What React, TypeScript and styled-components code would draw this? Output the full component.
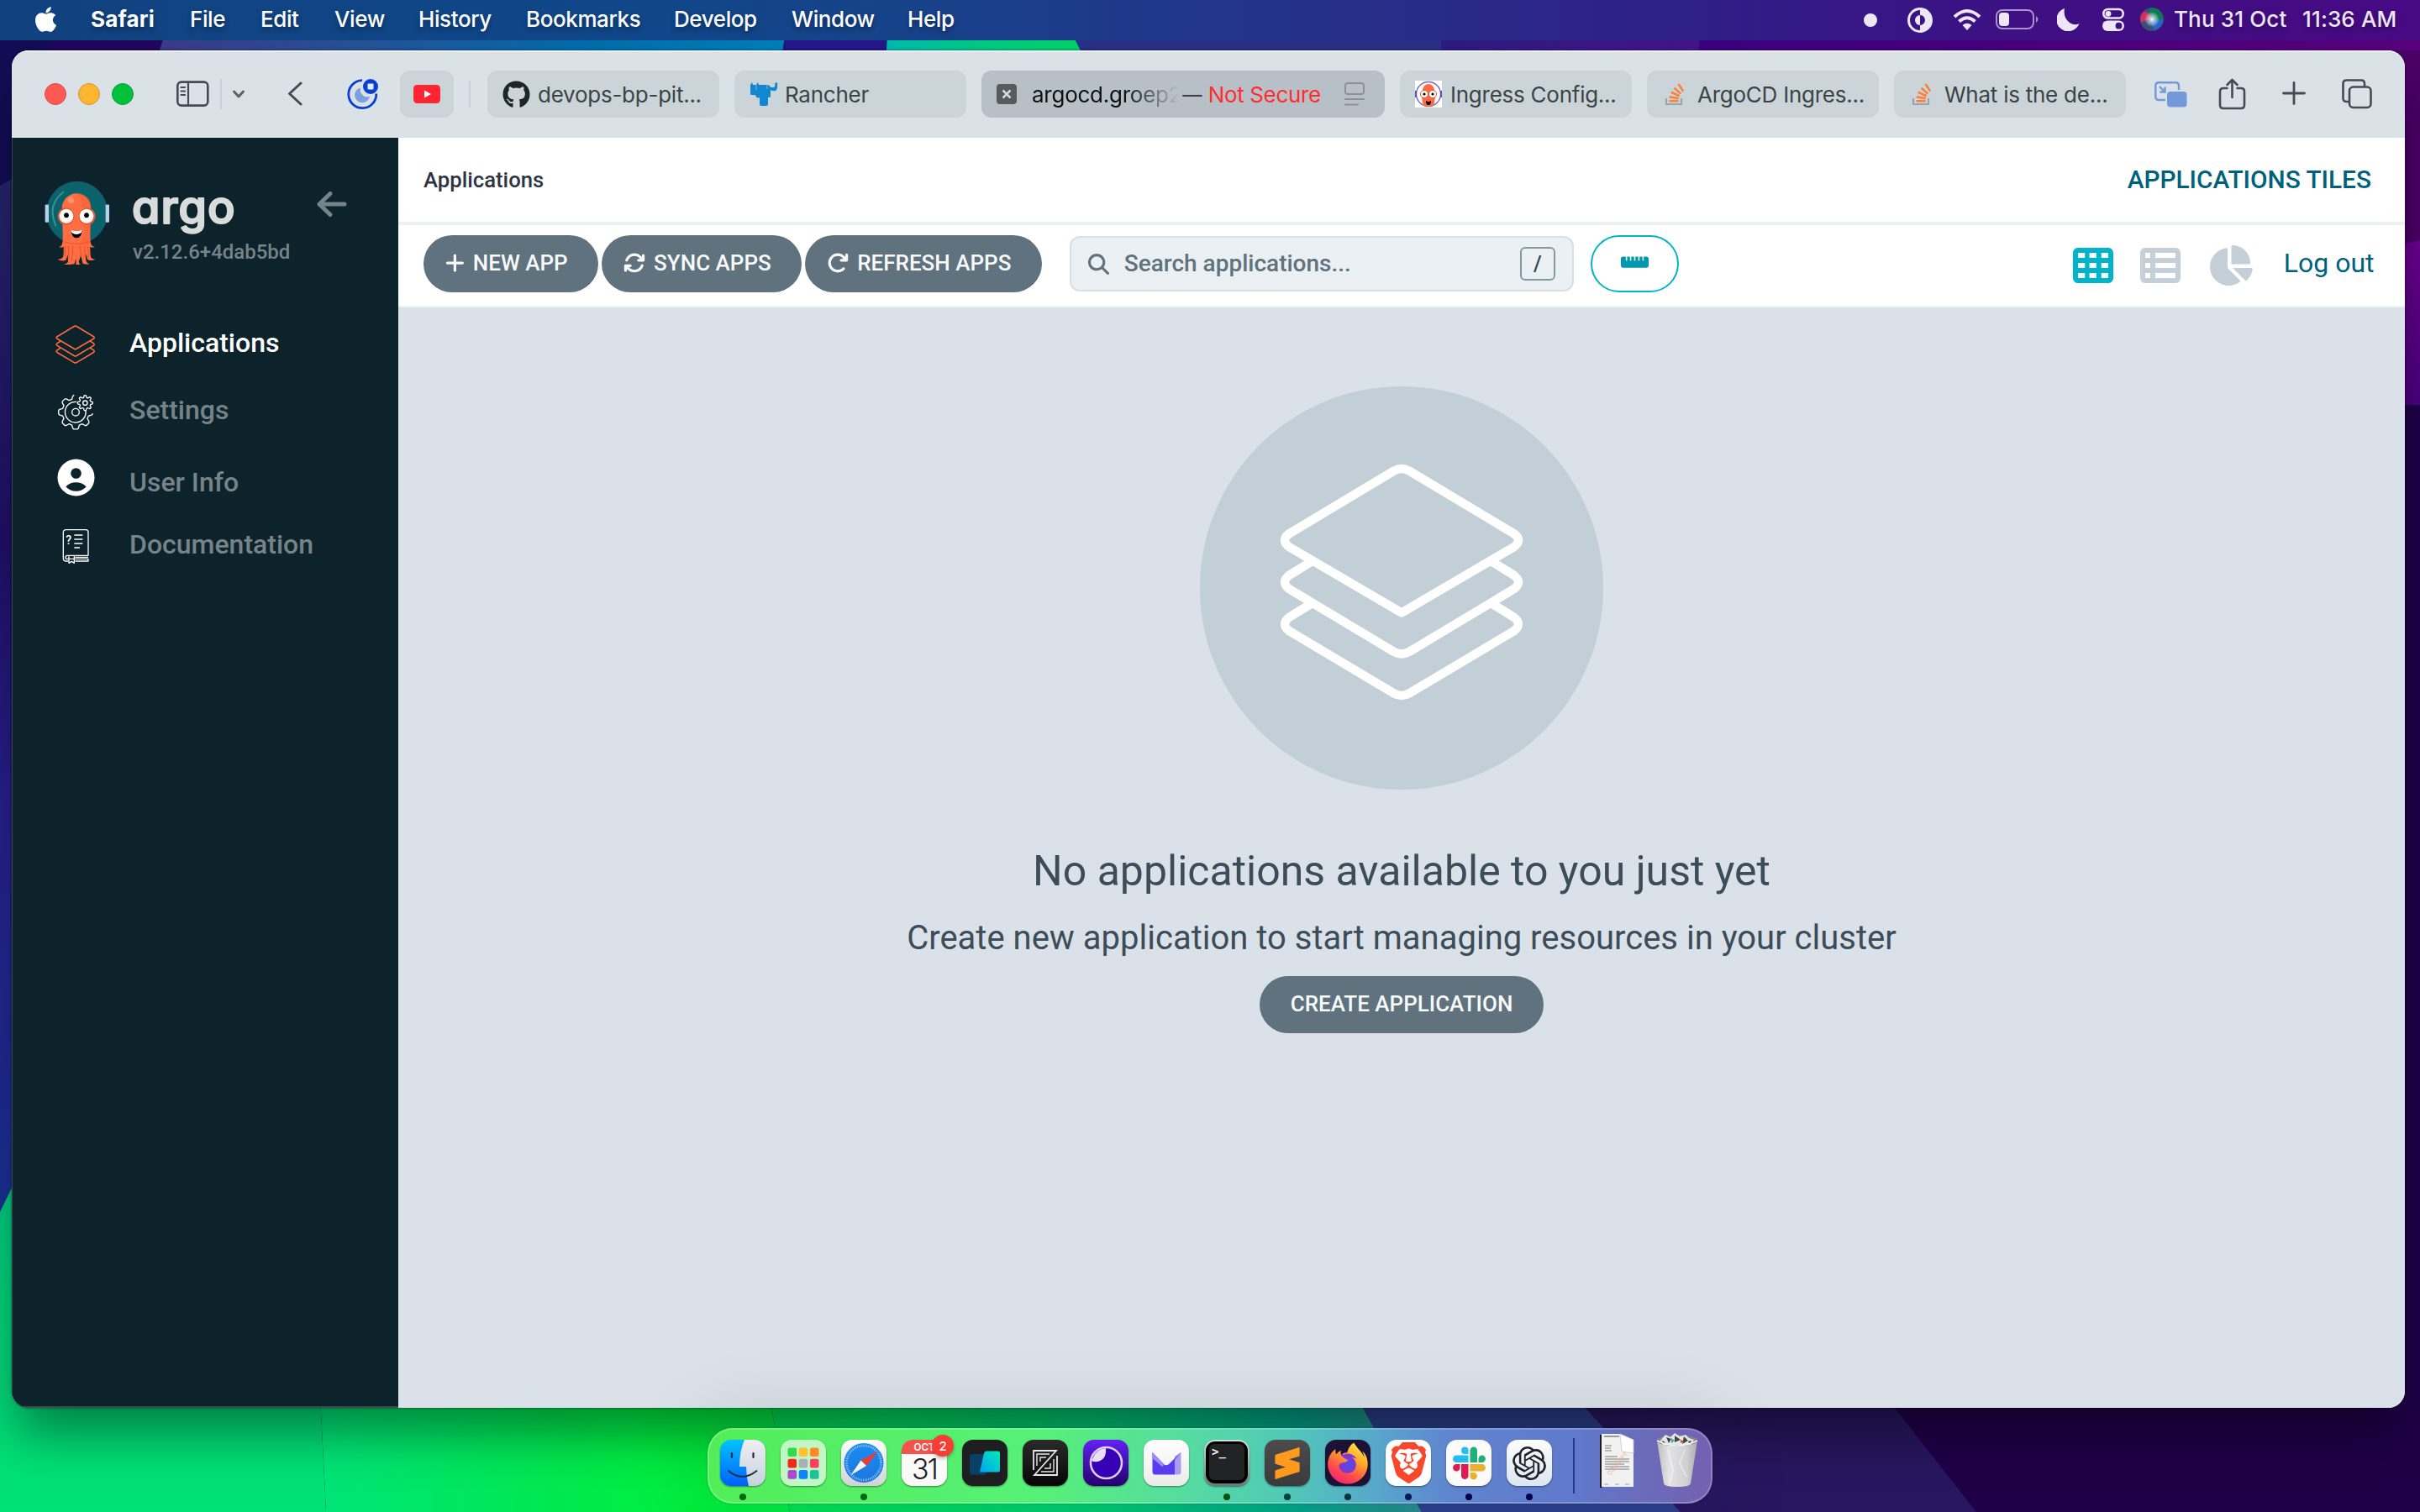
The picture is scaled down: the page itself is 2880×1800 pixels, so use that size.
import React from "react";
import styled, { createGlobalStyle } from "styled-components";
import {
  FaArrowRotateRight,
  FaArrowsRotate,
  FaChartPie,
  FaFirefoxBrowser,
  FaMagnifyingGlass,
  FaPlus,
  FaRulerHorizontal,
  FaTableCells,
  FaTableList,
  FaApple,
  FaGithub,
} from "react-icons/fa6";
import { SiBrave, SiOpenai, SiSublimetext } from "react-icons/si";

const ui = `Inter, "Liberation Sans", sans-serif`;
const web = `Roboto, "Liberation Sans", sans-serif`;

const GlobalStyle = createGlobalStyle`
  * { box-sizing: border-box; }
  body { margin: 0; background: #1c0048; overflow: hidden; }
  svg { display: block; flex: none; }
`;

/* ---------- Desktop ---------- */

const Desktop = styled.div`
  position: relative;
  width: 2880px;
  height: 1800px;
  overflow: hidden;
  display: flex;
  flex-direction: column;
  font-family: ${ui};
`;

const Wallpaper = styled.svg`
  position: absolute;
  inset: 0;
`;

const MenuBar = styled.header`
  position: relative;
  height: 48px;
  flex: none;
  display: flex;
  align-items: center;
  padding: 0 26px 3px 41px;
  color: #fff;
  font-size: 26px;
  font-weight: 500;
  background: linear-gradient(90deg, #11427f 0%, #10478a 25%, #17428a 38%, #263088 55%, #2f1f87 70%, #3d1083 83%, #480a84 100%);
  text-shadow: 0 4px 6px rgba(0, 0, 0, 0.35);
`;

const MenuItem = styled.span<{ $w: number; $bold?: boolean }>`
  width: ${(p) => p.$w}px;
  flex: none;
  white-space: pre;
  font-weight: ${(p) => (p.$bold ? 700 : 500)};
  letter-spacing: ${(p) => (p.$bold ? 0.2 : -0.4)}px;
`;

const Status = styled.div`
  margin-left: auto;
  display: flex;
  align-items: center;
  color: #ece6f6;
  white-space: nowrap;
`;

const Offset = styled.div<{ $ml?: number }>`
  margin-left: ${(p) => p.$ml ?? 0}px;
  flex: none;
`;

const Clock = styled.span<{ $w: number; $ml?: number }>`
  width: ${(p) => p.$w}px;
  margin-left: ${(p) => p.$ml ?? 0}px;
  letter-spacing: 0.15px;
`;

/* ---------- Browser window ---------- */

const Window = styled.main`
  position: relative;
  margin: 12px 18px 0 14px;
  height: 1616px;
  flex: none;
  border-radius: 20px;
  display: flex;
  flex-direction: column;
  overflow: hidden;
  background: #dae2e8;
  box-shadow: 0 0 3px rgba(0, 0, 0, 0.5);
`;

const WindowShadow = styled.div`
  position: absolute;
  left: 14px;
  top: 60px;
  width: 2848px;
  height: 1616px;
  border-radius: 20px;
  box-shadow: 0 36px 60px -6px rgba(0, 0, 0, 0.42);
`;

const Toolbar = styled.div`
  height: 104px;
  flex: none;
  display: flex;
  align-items: center;
  padding-left: 39px;
  background: #dae1e7;
  border-top: 2px solid #eef1f4;
  padding-bottom: 2px;
`;

const Lights = styled.div`
  display: flex;
  gap: 14px;
`;

const Light = styled.i<{ $c: string; $b: string }>`
  width: 26px;
  height: 26px;
  border-radius: 50%;
  background: ${(p) => p.$c};
  border: 1.5px solid ${(p) => p.$b};
`;

const Rule = styled.i<{ $h: number; $ml: number }>`
  width: 2px;
  height: ${(p) => p.$h}px;
  margin-left: ${(p) => p.$ml}px;
  background: #c6d0d6;
  flex: none;
`;

const PinnedTab = styled.div`
  width: 64px;
  height: 56px;
  margin-left: 25px;
  border-radius: 12px;
  background: #cad4d9;
  display: grid;
  place-items: center;
  flex: none;
`;

const Tabs = styled.div`
  margin-left: 20px;
  display: flex;
  gap: 18px;
`;

const Tab = styled.div<{ $active?: boolean }>`
  width: ${(p) => (p.$active ? 480 : 276)}px;
  height: 56px;
  border-radius: 12px;
  background: ${(p) => (p.$active ? "#b8c0c7" : "#cad4d9")};
  color: #3d4345;
  display: flex;
  align-items: center;
  gap: 10px;
  padding: 0 ${(p) => (p.$active ? 24 : 10)}px 0 18px;
  font-size: 26px;
  letter-spacing: -0.25px;
  white-space: nowrap;
`;

const Favicon = styled.span`
  width: 32px;
  height: 32px;
  display: grid;
  place-items: center;
  flex: none;
`;

const TabTitle = styled.span`
  padding-top: 1px;
`;

const Host = styled.span`
  flex: none;
  width: 184px;
  margin-left: 8px;
  padding-top: 1px;
  overflow: hidden;
  color: #0d0f10;
  -webkit-mask-image: linear-gradient(90deg, #000 60%, transparent 95%);
  mask-image: linear-gradient(90deg, #000 60%, transparent 95%);
`;

const Warning = styled.span`
  margin-left: -16px;
  padding-top: 1px;
  color: #ff2d2f;
  letter-spacing: -0.35px;
  b {
    font-weight: 400;
    color: #3d4345;
    margin-right: 6px;
    display: inline-block;
    transform: scaleX(0.9);
  }
`;

const Reader = styled.span`
  margin-left: auto;
`;

/* ---------- Argo CD ---------- */

const Page = styled.div`
  flex: 1;
  display: flex;
  min-height: 0;
`;

const Sidebar = styled.aside`
  width: 460px;
  flex: none;
  background: #0d232b;
  border-left: 1px solid #34454c;
  border-bottom: 2px solid #3d4a50;
  color: #768389;
  font-family: ${web};
  font-weight: 500;
`;

const Brand = styled.div`
  display: flex;
  height: 204px;
  padding: 51px 0 0 38px;
`;

const BrandText = styled.div`
  margin-left: 26px;
  width: 220px;
  padding-top: 8px;
`;

const Version = styled.div`
  margin-top: 1px;
  font-size: 24px;
  line-height: 28px;
  padding-left: 1px;
`;

const BackArrow = styled.svg`
  margin: 12px 0 0 -1px;
`;

const NavRow = styled.div<{ $h: number; $active?: boolean }>`
  height: ${(p) => p.$h}px;
  display: flex;
  align-items: center;
  padding-left: 51px;
  font-size: 32px;
  color: ${(p) => (p.$active ? "#fff" : "#768389")};
`;

const NavIcon = styled.span<{ $dy: number }>`
  width: 48px;
  margin-right: 40px;
  padding-top: ${(p) => Math.max(0, p.$dy * 2)}px;
  padding-bottom: ${(p) => Math.max(0, -p.$dy * 2)}px;
  display: grid;
  place-items: center;
`;

const Main = styled.section`
  flex: 1;
  display: flex;
  flex-direction: column;
  font-family: ${web};
`;

const TitleBar = styled.div`
  height: 104px;
  flex: none;
  display: flex;
  align-items: center;
  justify-content: space-between;
  padding: 0 40px 1px 30px;
  background: #fff;
  border-bottom: 4px solid #ebf0f3;
`;

const Crumb = styled.span`
  font-size: 25.7px;
  font-weight: 500;
  color: #2f3444;
`;

const ViewTitle = styled.span`
  font-size: 29.8px;
  font-weight: 500;
  color: #00617b;
`;

const Actions = styled.div`
  height: 98px;
  flex: none;
  display: flex;
  align-items: center;
  padding: 0 36.5px 4px 30px;
  background: #fff;
  border-bottom: 2px solid #ebf0f3;
`;

const Button = styled.button`
  height: 68px;
  border: 0;
  border-radius: 34px;
  padding: 0 37px 2px;
  display: flex;
  align-items: center;
  gap: 10px;
  background: #5f727d;
  color: #f8fafb;
  font: 500 26px ${web};
  white-space: nowrap;
`;

const ActionButton = styled(Button)`
  padding-left: 26px;
  padding-right: 36.4px;
  margin-right: 4px;
`;

const Search = styled.div`
  margin-left: 29px;
  width: 600px;
  height: 66px;
  border: 2px solid #d8e0e7;
  border-radius: 12px;
  background: #eaf0f3;
  display: flex;
  align-items: center;
  padding: 0 20px;
  color: #5f727d;
  font-size: 28px;
  font-weight: 500;
`;

const Placeholder = styled.span`
  margin-left: 18px;
  padding-bottom: 1px;
`;

const Key = styled.kbd`
  margin-left: auto;
  width: 42px;
  height: 40px;
  border: 2px solid #8398a4;
  border-radius: 6px;
  display: grid;
  place-items: center;
  font: 500 25px ${web};
  color: #35434d;
`;

const ScaleButton = styled.div`
  margin-left: 20px;
  width: 105px;
  height: 68px;
  border: 2px solid #00b4ca;
  border-radius: 34px;
  display: grid;
  place-items: center;
  padding-bottom: 4px;
  color: #0098ad;
`;

const Views = styled.div`
  margin-left: auto;
  display: flex;
  align-items: center;
  gap: 32px;
  color: #c4cfd7;
  padding-top: 4px;
`;

const LogOut = styled.span`
  margin-left: 37px;
  font-size: 32px;
  color: #00617b;
  padding-bottom: 2px;
`;

const Empty = styled.div`
  flex: 1;
  background: #dae1e8;
  display: flex;
  flex-direction: column;
  align-items: center;
  padding-top: 94px;
  color: #3d4c59;
`;

const Disc = styled.div`
  width: 480px;
  height: 480px;
  border-radius: 50%;
  background: #c3cfd7;
  display: grid;
  place-items: center;
  padding-bottom: 14px;
`;

const Heading = styled.h4`
  margin: 63px 0 0;
  font-size: 50px;
  line-height: 68px;
  font-weight: 400;
`;

const SubHeading = styled.h5`
  margin: 16px 0 15px;
  font-size: 40px;
  line-height: 60px;
  font-weight: 400;
`;

/* ---------- Dock ---------- */

const Dock = styled.nav`
  position: absolute;
  left: 842px;
  top: 1700px;
  width: 1196px;
  height: 90px;
  border-radius: 30px;
  border: 2px solid rgba(255, 255, 255, 0.22);
  background: linear-gradient(90deg, #52ee58 0%, #57f078 33%, #55dba2 48%, #50c8b8 58%, #58a5cc 67%, #6084cf 74%, #6079cc 86%, #6a6cba 93%, #7460b2 100%) border-box;
  box-shadow: 0 0 2px rgba(0, 0, 0, 0.3), 0 0 90px 10px rgba(20, 30, 50, 0.13);
  display: flex;
  align-items: flex-start;
  padding: 12px 0 0 13px;
  gap: 18px;
`;

const Slot = styled.div<{ $dot?: string }>`
  position: relative;
  width: 54px;
  height: 55px;
  flex: none;
  svg { overflow: visible; }
  &::after {
    content: "";
    display: ${(p) => (p.$dot ? "block" : "none")};
    position: absolute;
    left: 23px;
    top: 64px;
    width: 8px;
    height: 8px;
    border-radius: 50%;
    background: ${(p) => p.$dot};
  }
`;

const Tile = styled.div<{ $bg: string }>`
  width: 54px;
  height: 55px;
  border-radius: 13px;
  background: ${(p) => p.$bg};
  box-shadow: 0 1px 2px rgba(0, 0, 0, 0.45);
  overflow: hidden;
  display: grid;
  place-items: center;
`;

const Badge = styled.span`
  position: absolute;
  left: 36px;
  top: -6px;
  width: 26px;
  height: 26px;
  border-radius: 50%;
  background: #f83d35;
  color: #fff;
  font-size: 15px;
  font-weight: 500;
  display: grid;
  place-items: center;
  box-shadow: 0 2px 4px rgba(0, 0, 0, 0.3);
`;

const Calendar = styled.div`
  width: 54px;
  height: 55px;
  border-radius: 13px;
  overflow: hidden;
  background: #fbfaf9;
  box-shadow: 0 1px 2px rgba(0, 0, 0, 0.45);
  text-align: center;
`;

const Month = styled.div`
  height: 17px;
  background: #f4534b;
  color: #fff;
  font-size: 11.5px;
  font-weight: 600;
  line-height: 18px;
`;

const Day = styled.div`
  font-size: 34px;
  font-weight: 300;
  line-height: 36px;
  color: #222;
  letter-spacing: -2px;
`;

const DockRule = styled.i`
  width: 2px;
  height: 66px;
  margin: -2px 0 0 7px;
  background: rgba(20, 40, 130, 0.8);
  flex: none;
`;

const Extra = styled.div<{ $ml: number }>`
  margin: -8px 0 0 ${(p) => p.$ml}px;
`;

/* ---------- Drawings ---------- */

function Backdrop() {
  return (
    <Wallpaper width="2880" height="1800" viewBox="0 0 2880 1800">
      <defs>
        <linearGradient id="w1" x1="0" x2="1"><stop offset="0" stopColor="#3d3a88" /><stop offset=".35" stopColor="#24549a" /><stop offset=".7" stopColor="#006fae" /><stop offset="1" stopColor="#0080b8" /></linearGradient>
        <linearGradient id="w2" x1="0" x2="1"><stop offset="0" stopColor="#00bcb0" /><stop offset=".5" stopColor="#00cc80" /><stop offset="1" stopColor="#00d568" /></linearGradient>
        <linearGradient id="w3" x1="0" x2="1"><stop offset="0" stopColor="#2c1c82" /><stop offset="1" stopColor="#46148a" /></linearGradient>
        <linearGradient id="w4" x1="0" x2="1"><stop offset="0" stopColor="#3c0082" /><stop offset="1" stopColor="#58007c" /></linearGradient>
        <linearGradient id="wl" x1="0" x2="0" y1="0" y2="1"><stop offset="0" stopColor="#26266c" /><stop offset=".35" stopColor="#20106a" /><stop offset=".6" stopColor="#28208e" /><stop offset="1" stopColor="#1a3296" /></linearGradient>
        <linearGradient id="b1" x1="0" x2="0" y1="0" y2="1"><stop offset="0" stopColor="#00c488" /><stop offset=".5" stopColor="#00d67a" /><stop offset="1" stopColor="#00e274" /></linearGradient>
        <linearGradient id="b2" x1="0" x2="1"><stop offset="0" stopColor="#00e478" /><stop offset=".5" stopColor="#00e850" /><stop offset=".8" stopColor="#00f03c" /><stop offset="1" stopColor="#00ec44" /></linearGradient>
        <linearGradient id="b3" x1="0" x2="1"><stop offset="0" stopColor="#00e650" /><stop offset=".5" stopColor="#00cc72" /><stop offset=".8" stopColor="#00a888" /><stop offset="1" stopColor="#2a8a90" /></linearGradient>
        <linearGradient id="rr" x1="0" x2="0" y1="0" y2="1"><stop offset="0" stopColor="#6c0090" /><stop offset="1" stopColor="#4c0080" /></linearGradient>
      </defs>
      <rect width="2880" height="1800" fill="#1f0048" />
      <path d="M0 48H200L180 80H0Z" fill="#21075c" />
      <rect x="0" y="48" width="60" height="180" fill="#130d55" />
      <path d="M0 221L30 205V1450H0Z" fill="url(#wl)" />
      <path d="M196 40H935L928 80H184Z" fill="url(#w1)" />
      <path d="M935 40H1056L1054 80H928Z" fill="#24178a" />
      <path d="M1056 40H1276L1296 80H1054Z" fill="url(#w2)" />
      <path d="M1276 40H1715V80H1296Z" fill="#293088" />
      <rect x="1715" y="40" width="307" height="40" fill="url(#w3)" />
      <rect x="2022" y="40" width="858" height="60" fill="url(#w4)" />
      <rect x="2840" y="60" width="40" height="240" fill="#4b0068" />
      <path d="M2840 296L2880 286V482H2840Z" fill="url(#rr)" />
      <path d="M0 1443L14 1414L60 1320L378 1600L388 1800H0Z" fill="url(#b1)" />
      <path d="M378 1600H905L940 1800H388Z" fill="url(#b2)" />
      <path d="M905 1600H1597L1622 1676L1692 1800H940Z" fill="url(#b3)" />
      <path d="M1597 1600H1875L1887 1676L2000 1800H1692L1622 1676Z" fill="#2b3f8e" />
      <path d="M1870 1600H2240L2255 1676L2352 1800H2000L1887 1676Z" fill="#281660" />
    </Wallpaper>
  );
}

function Layers({ width, color, stroke = 10.4 }: { width: number; color: string; stroke?: number }) {
  return (
    <svg width={width} height={(width * 284) / 292} viewBox="1522 551 292 284" fill="none" stroke={color} strokeWidth={stroke} strokeLinejoin="round">
      <path d="M1659 560.5Q1668 555.5 1677 560.5L1802 635.5Q1812 643 1802 651L1668 729.5L1534 651Q1524 643 1534 635.5Z" />
      <path d="M1560 669L1534 685Q1524 693 1534 701L1659 776Q1668 781 1677 776L1802 701Q1812 693 1802 685L1776 669" />
      <path d="M1560 719L1534 735Q1524 743 1534 751L1659 825.5Q1668 830.5 1677 825.5L1802 751Q1812 743 1802 735L1776 719" />
    </svg>
  );
}

function gear(cx: number, cy: number, outer: number, root: number, from: number, count: number, closed: boolean) {
  const at = (r: number, deg: number) => {
    const a = (deg * Math.PI) / 180;
    return `${(cx + r * Math.cos(a)).toFixed(1)} ${(cy + r * Math.sin(a)).toFixed(1)}`;
  };
  const pts: string[] = [];
  for (let i = 0; i < count; i++) {
    const a = from + i * 45;
    if (closed || i > 0) pts.push(at(root, a - 16), at(outer - 3, a - 10), at(outer, a - 6));
    if (closed || i < count - 1) pts.push(at(outer, a + 6), at(outer - 3, a + 10), at(root, a + 16));
  }
  return `M${pts.join("L")}${closed ? "Z" : ""}`;
}

function Gears() {
  return (
    <svg width="46" height="45" viewBox="201 890 138 135" fill="none" stroke="#fff" strokeWidth="4" strokeLinejoin="round" strokeLinecap="round">
      <path d={gear(270, 958, 61, 48, 0, 7, false)} />
      <path d="M272 921A37 37 0 1 0 306 953" />
      <circle cx="270" cy="958" r="13" />
      <path d={gear(304, 925, 27, 20, 0, 8, true)} />
      <circle cx="304" cy="925" r="8" />
    </svg>
  );
}

function UserCircle() {
  return (
    <svg width="45" height="45" viewBox="0 0 45 45">
      <circle cx="22.5" cy="22.5" r="22" fill="#fff" />
      <circle cx="22.5" cy="17.5" r="6.3" fill="#0d232b" />
      <path d="M10.3 33.500C16 26.500 29 26.500 34.7 33.500C28 40.500 17 40.500 10.3 33.500Z" fill="#0d232b" />
    </svg>
  );
}

function Manual() {
  return (
    <svg width="32" height="43" viewBox="224 1358 96 129" fill="none" stroke="#fff" strokeWidth="4" strokeLinejoin="round">
      <path d="M246 1475H238Q228 1475 228 1466V1372Q228 1363 238 1363H308Q317 1363 317 1372V1455H242Q236 1455 236 1462T242 1467H317V1475H270" />
      <path d="M248 1455V1482L258 1476L267 1482V1455M270 1461H317" />
      <path d="M267 1382H297M267 1397H297M267 1412H297M267 1427H287" />
      <text x="237" y="1414" fontSize="42" fontWeight="500" fontFamily="Roboto, sans-serif" fill="#fff" stroke="none">?</text>
    </svg>
  );
}

function Octopus() {
  return (
    <svg width="78" height="101" viewBox="160 161 234 294" preserveAspectRatio="none">
      <circle cx="276" cy="272" r="107" fill="#0a626b" stroke="#1a5876" strokeWidth="4" />
      <rect x="162" y="244" width="13" height="62" rx="3" fill="#b4d0ea" />
      <rect x="378" y="244" width="13" height="62" rx="3" fill="#b4d0ea" />
      <path d="M226 201Q168 246 200 317" fill="none" stroke="#3d8f93" strokeWidth="6" strokeLinecap="round" />
      <path d="M222 257A51 51 0 0 1 325 257L323 340Q322 372 327 383Q333 392 341 390Q330 395 323 390Q322 415 326 428Q333 433 342 434Q322 441 313 434L309 415Q306 432 309 441Q314 448 320 451Q300 452 296 448L290 420L282 441Q284 451 289 452H272L273 430L266 450Q248 453 229 451Q240 448 244 443L243 418Q238 432 236 437Q222 442 206 434Q222 433 226 426Q229 412 228 390Q220 395 211 390Q220 391 223 380Q226 370 225 340Z" fill="#ff6e43" />
      <path d="M274 206Q326 206 326 258L323 340Q322 372 324 380Q300 386 274 382Q296 376 302 350L304 262Q292 250 292 236Q290 214 268 206Z" fill="#f5603a" opacity=".6" />
      <path d="M246 388V430M262 388L257 440M288 388L290 425M303 388L305 428M234 388L232 425M316 388L317 425" stroke="#df4f2c" strokeWidth="3" fill="none" />
      <path d="M228 372Q274 390 321 372" stroke="#e9572f" strokeWidth="3" fill="none" />
      <circle cx="254" cy="229" r="11" fill="#ff9271" />
      <circle cx="237" cy="285" r="30" fill="#f0532f" />
      <circle cx="312" cy="285" r="30" fill="#f0532f" />
      <circle cx="238" cy="284" r="25" fill="#fff" />
      <circle cx="310" cy="284" r="25" fill="#fff" />
      <circle cx="238" cy="281" r="8.5" fill="#000" />
      <circle cx="310" cy="281" r="8.5" fill="#000" />
      <path d="M254 331Q274 348 294 331Q292 359 274 360Q257 359 254 331Z" fill="#000" />
      <path d="M254 331Q274 342 294 331Q293 338 290 342Q274 352 258 342Q255 338 254 331Z" fill="#fff" />
    </svg>
  );
}

function Wordmark() {
  return (
    <svg width="150" height="62" viewBox="0 0 150 62" overflow="visible">
      <text
        x="0"
        y="42.500"
        fontFamily="Inter, sans-serif"
        fontSize="54"
        fontWeight="500"
        letterSpacing="1.100"
        fill="#d9dcdb"
        stroke="#d9dcdb"
        strokeWidth="2.200"
        strokeLinejoin="round"
        style={{ fontFeatureSettings: '"cv11"' }}
      >
        argo
      </text>
    </svg>
  );
}

function ArgoFavicon() {
  return (
    <svg width="32" height="32" viewBox="0 0 32 32">
      <rect width="32" height="32" fill="#fff" />
      <circle cx="16" cy="16" r="14.5" fill="#fff" stroke="#7a68c0" strokeWidth="1.4" />
      <path d="M0.8 12V20M31.2 12V20" stroke="#5a48b0" strokeWidth="1.6" />
      <path d="M9 12A7 8 0 0 1 23 12L24 20Q23 26 22 30Q16 32 10 30Q9 26 8 20Z" fill="#fb6a42" />
      <circle cx="11" cy="16" r="4.6" fill="#fff" stroke="#f0532f" />
      <circle cx="21" cy="16" r="4.6" fill="#fff" stroke="#f0532f" />
      <circle cx="11" cy="16" r="1.6" /><circle cx="21" cy="16" r="1.6" />
      <path d="M13 24Q16 26 19 24Q19 29 16 29Q13 29 13 24Z" />
    </svg>
  );
}

function RancherBull() {
  return (
    <svg width="34" height="28" viewBox="0 0 34 28" fill="#1287cf">
      <path d="M1 3L3 0L4 3H8L10 0L11 3H21Q24 3 25 6H29Q31 5 30 1L33 0Q34 8 31 10Q28 11 25 9V17Q25 18 23 18H22V26Q22 28 20 28H14Q12 28 12 26V18Q8 20 7 15H2Q1 15 1 13Z" />
      <path d="M8 3V9M21 3V8" stroke="#cad4d9" strokeWidth=".8" opacity=".7" />
    </svg>
  );
}

function StackOverflow() {
  return (
    <svg width="26" height="28" viewBox="0 0 26 28" fill="none">
      <path d="M2 19V26H20V19" stroke="#9aa4aa" strokeWidth="2.2" />
      <path d="M5.5 22.2H16.5M5.8 17.4L16.8 19.2M7.8 11.8L17.6 16.2M11.5 6.6L19.3 13.6M16.5 2L22.2 10.6" stroke="#f9813a" strokeWidth="2.6" />
    </svg>
  );
}

function MenuStatus() {
  return (
    <Status>
      <svg width="16" height="18" viewBox="0 0 16 18"><circle cx="8" cy="10" r="8" fill="#ece6f6" /></svg>
      <Offset $ml={35}>
        <svg width="32" height="32" viewBox="0 0 32 32">
          <circle cx="16" cy="17" r="13.500" fill="none" stroke="#ece6f6" strokeWidth="3" />
          <path d="M16 3A14 14 0 0 1 16 31V23A6 6 0 0 0 16 11Z" fill="#ece6f6" />
          <path d="M16 11A6 6 0 0 0 16 23Z" fill="#ece6f6" />
        </svg>
      </Offset>
      <Offset $ml={23}>
        <svg width="34" height="28" viewBox="0 0 34 28" fill="none" stroke="#ece6f6" strokeWidth="4">
          <path d="M2 11Q17 -3 32 11M7.5 16.5Q17 8 26.5 16.5" />
          <path d="M17 27L11.5 21Q17 16.5 22.5 21Z" fill="#ece6f6" stroke="none" />
        </svg>
      </Offset>
      <Offset $ml={17}>
        <svg width="51" height="24" viewBox="0 0 51 24">
          <rect x="1" y="1" width="44" height="22" rx="7" fill="none" stroke="#a891cc" strokeWidth="2" />
          <rect x="4" y="4" width="12" height="16" rx="4" fill="#ece6f6" />
          <path d="M48 8Q50.5 10 50.5 12T48 16Z" fill="#a891cc" />
        </svg>
      </Offset>
      <Offset $ml={22}>
        <svg width="27" height="28" viewBox="0 0 27 28"><path d="M9 1A14 14 0 1 0 26.5 19Q21 22 15 18Q7 12 9 1Z" fill="#ece6f6" /></svg>
      </Offset>
      <Offset $ml={27}>
        <svg width="26" height="28" viewBox="0 0 26 28">
          <rect x="1.3" y="2" width="23.4" height="10.5" rx="5.25" fill="none" stroke="#ece6f6" strokeWidth="2.6" />
          <circle cx="7" cy="7.3" r="3.4" fill="#ece6f6" />
          <rect x="0" y="15.5" width="26" height="12.5" rx="6.25" fill="#ece6f6" />
          <circle cx="19.5" cy="21.7" r="3.9" fill="#3d1083" />
        </svg>
      </Offset>
      <Offset $ml={19}>
        <svg width="28" height="28" viewBox="0 0 28 28">
          <defs>
            <radialGradient id="siriCore" cx=".5" cy=".5" r=".5"><stop offset="0" stopColor="#fff" /><stop offset=".35" stopColor="#cfe0f0" stopOpacity=".75" /><stop offset="1" stopColor="#fff" stopOpacity="0" /></radialGradient>
          </defs>
          <circle cx="14" cy="14" r="14" fill="#3a4e78" />
          <path d="M12 0.5A13.5 13.5 0 0 1 27.5 14L14 14Q8 8 12 0.5Z" fill="#0a7a54" />
          <path d="M5 4.500Q12 6 14 14Q8 14 1 18Q-2 9 5 4.500Z" fill="#d0305c" />
          <path d="M14 14L27.500 14Q26 24 17 27.200Q12 20 14 14Z" fill="#2766c4" />
          <circle cx="14" cy="14" r="9" fill="url(#siriCore)" />
        </svg>
      </Offset>
      <Clock $w={153} $ml={12}>Thu 31 Oct</Clock>
      <Clock $w={114}>11:36 AM</Clock>
    </Status>
  );
}

const ink = "#434c52";

function BrowserToolbar() {
  return (
    <Toolbar>
      <Lights>
        <Light $c="#ff5a52" $b="#d8453f" />
        <Light $c="#ffb532" $b="#d6952a" />
        <Light $c="#00c03c" $b="#049e35" />
      </Lights>
      <Offset $ml={50}>
        <svg width="41" height="32" viewBox="0 0 41 32" fill="none" stroke={ink} strokeWidth="2.6" strokeLinecap="round">
          <rect x="2.3" y="1.6" width="36" height="28" rx="4.5" />
          <path d="M15 2V29M6.5 8H11M6.5 12.5H11M6.5 17H11" strokeWidth="2.2" />
        </svg>
      </Offset>
      <Rule $h={36} $ml={12} />
      <Offset $ml={12}>
        <svg width="16" height="12" viewBox="0 0 16 12" fill="none" stroke="#59636a" strokeWidth="3" strokeLinecap="round" strokeLinejoin="round"><path d="M2.5 3L8 9L13.5 3" /></svg>
      </Offset>
      <Offset $ml={50}>
        <svg width="18" height="30" viewBox="0 0 18 30" fill="none" stroke={ink} strokeWidth="3" strokeLinecap="round" strokeLinejoin="round"><path d="M16 2L2.500 14.500L16 27" /></svg>
      </Offset>
      <Offset $ml={52}>
        <svg width="39" height="38" viewBox="0 0 39 38">
          <path d="M19 2.700A16.500 16.500 0 1 0 35.800 18.500" fill="none" stroke="#0a3fd0" strokeWidth="2.8" />
          <path d="M17 11.5A9 9 0 1 0 28 21.5Q24 23.5 20.5 21Q15.5 17 17 11.5Z" fill="#7ba2de" />
          <circle cx="29" cy="10" r="9" fill="#0a3fd0" />
          <rect x="25.5" y="6.5" width="7" height="7" rx="1" fill="#e4ebf4" />
        </svg>
      </Offset>
      <PinnedTab>
        <svg width="32" height="22" viewBox="0 0 32 22"><rect width="32" height="22" rx="4.5" fill="#ff2433" /><path d="M13 6.5L21 11L13 15.5Z" fill="#fff" /></svg>
      </PinnedTab>
      <Rule $h={32} $ml={18} />
      <Tabs>
        <Tab><Favicon><FaGithub size={33} color="#1f2427" /></Favicon><TabTitle>devops-bp-pit...</TabTitle></Tab>
        <Tab><Favicon><RancherBull /></Favicon><TabTitle>Rancher</TabTitle></Tab>
        <Tab $active>
          <svg width="24" height="24" viewBox="0 0 24 24"><rect width="24" height="24" rx="4" fill="#555b5f" /><path d="M7.5 7.5L16.5 16.5M16.5 7.5L7.5 16.5" stroke="#d5dade" strokeWidth="2.5" /></svg>
          <Host>argocd.groep2</Host>
          <Warning><b>—</b>Not Secure</Warning>
          <Reader>
            <svg width="24" height="28" viewBox="0 0 24 28" fill="none" stroke="#8b9297" strokeWidth="2" strokeLinecap="round">
              <rect x="1" y="1" width="22" height="13" rx="3" /><path d="M1 20H23M1 26.5H16" />
            </svg>
          </Reader>
        </Tab>
        <Tab><Favicon><ArgoFavicon /></Favicon><TabTitle>Ingress Config...</TabTitle></Tab>
        <Tab><Favicon><StackOverflow /></Favicon><TabTitle>ArgoCD Ingres...</TabTitle></Tab>
        <Tab><Favicon><StackOverflow /></Favicon><TabTitle>What is the de...</TabTitle></Tab>
      </Tabs>
      <Offset $ml={34}>
        <svg width="39" height="31" viewBox="0 0 39 31">
          <path d="M13 22H5Q1.3 22 1.3 18V5Q1.3 1.3 5 1.3H25Q29 1.3 29 5V10" fill="none" stroke="#7399da" strokeWidth="2.4" />
          <path d="M6 6L12 12M12.5 6.5V12.5H6.5" stroke="#7399da" strokeWidth="2.4" fill="none" />
          <rect x="15" y="12" width="23.5" height="18.5" rx="4" fill="#7399da" />
        </svg>
      </Offset>
      <Offset $ml={37}>
        <svg width="33" height="38" viewBox="0 0 33 38" fill="none" stroke={ink} strokeWidth="2.6" strokeLinecap="round" strokeLinejoin="round">
          <path d="M10.5 12H6Q2 12 2 16V32Q2 36 6 36H27Q31 36 31 32V16Q31 12 27 12H22.5" />
          <path d="M16.5 23V2M10.5 8L16.5 2L22.5 8" />
        </svg>
      </Offset>
      <Offset $ml={43}>
        <svg width="28" height="30" viewBox="0 0 28 30" fill="none" stroke={ink} strokeWidth="2.8" strokeLinecap="round"><path d="M1.5 14H26.5M14 1.5V26.5" /></svg>
      </Offset>
      <Offset $ml={43}>
        <svg width="36" height="36" viewBox="0 0 36 36" fill="none" stroke={ink} strokeWidth="2.6">
          <path d="M8.5 27H5.5Q1.5 27 1.5 23V5.5Q1.5 1.5 5.5 1.5H23Q27 1.5 27 5.5V9" />
          <rect x="9" y="9.5" width="25.5" height="24.5" rx="4.5" />
        </svg>
      </Offset>
    </Toolbar>
  );
}

function ArgoPage() {
  return (
    <Page>
      <Sidebar>
        <Brand>
          <Octopus />
          <BrandText>
            <Wordmark />
            <Version>v2.12.6+4dab5bd</Version>
          </BrandText>
          <BackArrow width="37" height="32" viewBox="0 0 37 32" fill="none" stroke="#768389" strokeWidth="5" strokeLinecap="round" strokeLinejoin="round">
            <path d="M34 16H4M17 3.500L4 16L17 28.500" />
          </BackArrow>
        </Brand>
        <NavRow $h={80} $active><NavIcon $dy={2}><Layers width={47.4} color="#ff6a40" stroke={9.6} /></NavIcon>Applications</NavRow>
        <NavRow $h={80}><NavIcon $dy={2}><Gears /></NavIcon>Settings</NavRow>
        <NavRow $h={92}><NavIcon $dy={-5.5}><UserCircle /></NavIcon>User Info</NavRow>
        <NavRow $h={56}><NavIcon $dy={2}><Manual /></NavIcon>Documentation</NavRow>
      </Sidebar>
      <Main>
        <TitleBar>
          <Crumb>Applications</Crumb>
          <ViewTitle>APPLICATIONS TILES</ViewTitle>
        </TitleBar>
        <Actions>
          <ActionButton><FaPlus style={{ width: 22.75, height: 26 }} />NEW APP</ActionButton>
          <ActionButton><FaArrowsRotate />SYNC APPS</ActionButton>
          <ActionButton><FaArrowRotateRight />REFRESH APPS</ActionButton>
          <Search>
            <FaMagnifyingGlass size={25} />
            <Placeholder>Search applications...</Placeholder>
            <Key>/</Key>
          </Search>
          <ScaleButton><FaRulerHorizontal style={{ width: 33, height: 26.4 }} /></ScaleButton>
          <Views>
            <FaTableCells size={48} color="#00b4ca" />
            <FaTableList size={48} />
            <FaChartPie style={{ width: 54, height: 48 }} />
          </Views>
          <LogOut>Log out</LogOut>
        </Actions>
        <Empty>
          <Disc><Layers width={292} color="#fff" /></Disc>
          <Heading>No applications available to you just yet</Heading>
          <SubHeading>Create new application to start managing resources in your cluster</SubHeading>
          <Button>CREATE APPLICATION</Button>
        </Empty>
      </Main>
    </Page>
  );
}

const pads = ["#34d84c", "#ffc22e", "#ff8a22", "#f0291f", "#a9b0b8", "#ff3f5f", "#a64ad0", "#0a84ff", "#1cc29a"];

function DockBar() {
  const dark = ["#006a12", "#00520f", "#004238", "#00363e", "#001a52", "#00004e", "#00004e"];
  return (
    <Dock>
      <Slot $dot={dark[0]}>
        <Tile $bg="linear-gradient(#04c3ff, #0060ff)">
          <svg width="54" height="55" viewBox="0 0 54 55">
            <defs><linearGradient id="face" x1="0" x2="0" y1="0" y2="1"><stop offset="0" stopColor="#efeef2" /><stop offset="1" stopColor="#c5d3e0" /></linearGradient></defs>
            <path d="M29 0Q23 14 23 32H31Q31 44 34 55H54V0Z" fill="url(#face)" />
            <path d="M14 16V21M39.5 16V21" stroke="#1d2b3d" strokeWidth="2.2" strokeLinecap="round" />
            <path d="M10 37Q26 51 43.5 37" fill="none" stroke="#1d2b3d" strokeWidth="1.8" strokeLinecap="round" />
          </svg>
        </Tile>
      </Slot>
      <Slot>
        <Tile $bg="rgba(235,250,235,0.72)">
          <svg width="54" height="55" viewBox="0 0 54 55">
            {pads.map((c, i) => <rect key={c} x={8.5 + (i % 3) * 13.2} y={9.5 + Math.floor(i / 3) * 13.3} width="10.6" height="10.6" rx="2.5" fill={c} />)}
          </svg>
        </Tile>
      </Slot>
      <Slot $dot={dark[0]}>
        <Tile $bg="linear-gradient(#fff, #d0d3d6)">
          <svg width="54" height="55" viewBox="0 0 54 55">
            <defs><linearGradient id="compass" x1="0" x2="0" y1="0" y2="1"><stop offset="0" stopColor="#1a8df0" /><stop offset="1" stopColor="#1e76e0" /></linearGradient></defs>
            <circle cx="27" cy="27.5" r="23.5" fill="url(#compass)" />
            <circle cx="27" cy="27.5" r="20.5" fill="none" stroke="#b8dcfa" strokeWidth="2.8" strokeDasharray="0.7 1.45" />
            <path d="M44.5 13.5L30 31L23.5 24.5Z" fill="#f23b30" />
            <path d="M11.5 42L30 31L23.5 24.5Z" fill="#f3f5f7" />
          </svg>
        </Tile>
      </Slot>
      <Slot>
        <Calendar><Month>OCT</Month><Day>31</Day></Calendar>
        <Badge>2</Badge>
      </Slot>
      <Slot>
        <Tile $bg="#1e1e20">
          <svg width="54" height="55" viewBox="0 0 54 55">
            <defs><linearGradient id="teal" x1="0" x2="1" y1="1" y2="0"><stop offset="0" stopColor="#00a2f5" /><stop offset="1" stopColor="#04ecb4" /></linearGradient></defs>
            <rect x="9" y="17" width="20" height="24.5" rx="3" fill="#0a3f68" />
            <path d="M29 13.5H42.5Q45 13.5 45 16V36Q45 38.5 42.5 38.5H21L26 16Q26.5 13.5 29 13.5Z" fill="url(#teal)" />
          </svg>
        </Tile>
      </Slot>
      <Slot>
        <Tile $bg="linear-gradient(#2a2a2b, #060606)">
          <svg width="54" height="55" viewBox="0 0 54 55" fill="none" stroke="#e8e8ea" strokeWidth="1.8">
            <path d="M13 36V13H40L14 42H41V19" />
            <path d="M17 31V17H32M37 23V38H22M21 26V21H28M33 28V34H26" strokeWidth="1.4" />
          </svg>
        </Tile>
      </Slot>
      <Slot>
        <Tile $bg="linear-gradient(#6420f4, #25006e)">
          <svg width="54" height="55" viewBox="0 0 54 55">
            <circle cx="27.5" cy="27.5" r="18.5" fill="#3800b4" stroke="#dccff4" strokeWidth="2.6" />
            <path d="M12 21Q16 11 27 10Q28 20 22 24Q16 28 10 25Z" fill="#e8e0fa" />
          </svg>
        </Tile>
      </Slot>
      <Slot>
        <Tile $bg="linear-gradient(#fff, #ecebea)">
          <svg width="54" height="55" viewBox="0 0 54 55">
            <path d="M37 20L44.5 15V38.5Q44.5 41.5 41.5 41.5H37Z" fill="#a99cf5" />
            <path d="M10.5 15L24 29Q27 31.5 30 29L44 15L37 24V41.5H14Q10.5 41.5 10.5 38Z" fill="#5a3cf0" />
            <path d="M10.5 15L25 29.5L22 32L10.5 22Z" fill="#9d8cf8" />
          </svg>
        </Tile>
      </Slot>
      <Slot $dot={dark[1]}>
        <Tile $bg="linear-gradient(#d8e2e4, #6f7678)">
          <svg width="54" height="55" viewBox="0 0 54 55">
            <rect x="2" y="2" width="50" height="50" rx="11" fill="#000" />
            <rect x="6" y="5" width="42" height="43" rx="6" fill="#222324" />
            <text x="9" y="19" fontSize="14" fontWeight="700" fontFamily="DejaVu Sans Mono, monospace" fill="#fff">&gt;_</text>
          </svg>
        </Tile>
      </Slot>
      <Slot $dot={dark[2]}><Tile $bg="linear-gradient(#4c4c4c, #3a3a3a)"><SiSublimetext size={38} color="#ff9a1f" /></Tile></Slot>
      <Slot $dot={dark[3]}>
        <Tile $bg="#1e1136">
          <svg width="50" height="52" viewBox="0 0 50 52">
            <defs>
              <linearGradient id="fox" x1=".75" x2=".2" y1="0" y2="1"><stop offset="0" stopColor="#ffe83e" /><stop offset=".35" stopColor="#ffa62a" /><stop offset=".7" stopColor="#ff4a4e" /><stop offset="1" stopColor="#f01f78" /></linearGradient>
              <radialGradient id="globe"><stop offset="0" stopColor="#4a50e8" /><stop offset="1" stopColor="#9a2bc8" /></radialGradient>
            </defs>
            <circle cx="25" cy="27" r="14" fill="url(#globe)" />
            <g transform="translate(0 1)"><FaFirefoxBrowser size={50} style={{ fill: "url(#fox)" }} /></g>
          </svg>
        </Tile>
      </Slot>
      <Slot $dot={dark[4]}><Tile $bg="#fff"><SiBrave size={49} color="#f8472a" /></Tile></Slot>
      <Slot $dot={dark[5]}>
        <Tile $bg="#fbfbfb">
          <svg width="54" height="55" viewBox="0 0 54 55">
            <path d="M12.2 18.5H26.5V27H12.2A4.2 4.2 0 0 1 12.2 18.5ZM26.5 17H22.2A4.2 4.2 0 1 1 26.5 12.8Z" fill="#22bff0" />
            <path d="M28.5 27V12.8A4.2 4.2 0 0 1 37 12.8V27ZM38.5 27V22.8A4.2 4.2 0 1 1 42.7 27Z" fill="#1faf78" />
            <path d="M26.5 29V42.7A4.2 4.2 0 0 1 18 42.7V29ZM16.5 29V33.2A4.2 4.2 0 1 1 12.3 29Z" fill="#e01a55" />
            <path d="M28.5 29H42.7A4.2 4.2 0 0 1 42.7 37.5H28.5ZM28.5 39H32.7A4.2 4.2 0 1 1 28.5 43.2Z" fill="#edb02e" />
          </svg>
        </Tile>
      </Slot>
      <Slot $dot={dark[6]}><Tile $bg="linear-gradient(#fdfdfe, #dce6f0)"><SiOpenai size={40} color="#20242a" /></Tile></Slot>
      <DockRule />
      <Extra $ml={11}>
        <svg width="42" height="67" viewBox="0 0 42 67">
          <path d="M1 2H4V65H1Z" fill="#1c1c1e" />
          <path d="M3 1H25L41 8V64H3Z" fill="#f1f1f1" />
          <path d="M25 1L41 8V24L27 22Z" fill="#fff" stroke="#c9c9c9" strokeWidth=".8" />
          <path d="M6 4H24" stroke="#9a9a9a" strokeWidth="2" />
          <path d="M7 15H15M7 18H14M7 21H15M7 28H22M7 31H36M7 34H36M7 37H30M7 40H36M7 43H36" stroke="#a2a2a2" strokeWidth="1.3" />
          <path d="M6 61H11M19 61H24M31 61H36" stroke="#7ea4dc" strokeWidth="1" />
          <text x="0" y="0" transform="translate(13 51) rotate(-50)" fontSize="7" fontFamily="Inter, sans-serif" fill="#eeb094">CONCEPT</text>
        </svg>
      </Extra>
      <Extra $ml={8}>
        <svg width="50" height="66" viewBox="0 0 50 66">
          <defs><linearGradient id="bin" x1="0" x2="1"><stop offset="0" stopColor="#bdbdc0" /><stop offset=".3" stopColor="#e4e4e5" /><stop offset=".75" stopColor="#cfcfd2" /><stop offset="1" stopColor="#aaaab0" /></linearGradient></defs>
          <path d="M1 9L9 60Q10 64 25 64T41 60L49 9Z" fill="url(#bin)" />
          <ellipse cx="25" cy="9" rx="24" ry="6.5" fill="#85858b" />
          <path d="M5 9L11 2L17 5L22 0L28 4L35 2L39 6L45 8L41 14L8 14Z" fill="#e6e6e6" />
          <path d="M12 5L18 7L15 12ZM22 3L29 8L22 11ZM33 4L38 9L31 13ZM7 9L11 11L8 13ZM38 10L42 9L40 13Z" fill="#444" />
          <path d="M18 6L22 9L18 12Z" fill="#39b0b8" /><path d="M29 8L33 10L29 12Z" fill="#b8563a" />
          <path d="M1 9Q25 21 49 9" fill="none" stroke="#f4f4f6" strokeWidth="1.6" />
          <path d="M14 20L20 44L16 60M34 20L28 36L36 52" stroke="#fff" strokeWidth="2" opacity=".4" fill="none" />
        </svg>
      </Extra>
    </Dock>
  );
}

const menus: [string, number][] = [
  ["File", 84], ["Edit", 88], ["View", 100], ["History", 128], ["Bookmarks", 176], ["Develop", 140], ["Window", 138], ["Help", 60],
];

export default function App() {
  return (
    <Desktop>
      <GlobalStyle />
      <Backdrop />
      <WindowShadow />
      <MenuBar>
        <FaApple style={{ width: 27, height: 34 }} />
        <Offset $ml={40} />
        <MenuItem $w={118} $bold>Safari</MenuItem>
        {menus.map(([label, w]) => <MenuItem key={label} $w={w}>{label}</MenuItem>)}
        <MenuStatus />
      </MenuBar>
      <Window>
        <BrowserToolbar />
        <ArgoPage />
      </Window>
      <DockBar />
    </Desktop>
  );
}
